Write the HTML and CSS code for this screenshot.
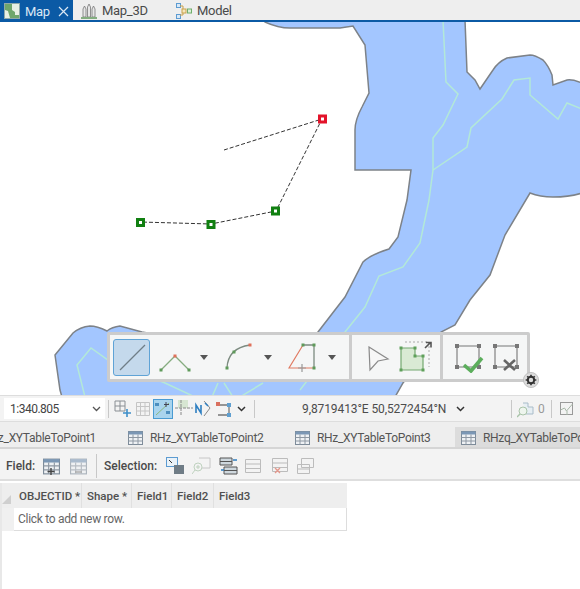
FILE: index.html
```html
<!DOCTYPE html>
<html lang="en">

<head>
  <meta charset="UTF-8">
  <title>Map</title>
  <link rel="stylesheet" href="styles.css">
</head>

<body>
  <div class="viewTabs">
    <div class="viewTab active">
      <svg viewBox="0 0 16 16" width="16" height="16">
        <rect x="0.500" y="0.500" width="15" height="15" fill="#e8f0e4" stroke="#8fa8a8" />
        <path d="M1 1h7v6l3 2v3h4v3H6l-2-7-3-1z" fill="#6fa66c" />
      </svg>
      <span class="tabName">Map</span>
      <svg class="closeIco" viewBox="0 0 11 11" width="11" height="11">
        <path d="M1 1l9 9M10 1l-9 9" stroke="#dbe8f4" stroke-width="1.200" fill="none" />
      </svg>
    </div>
    <div class="viewTab map3d">
      <svg viewBox="0 0 16 16" width="16" height="16">
        <path d="M2 14V6l1.500-3L5 6v8zM6.500 14V4L8 1l1.500 3v10zM11 14V6l1.500-3L14 6v8z" fill="#e6e6e6" stroke="#777" stroke-width="0.800" />
        <path d="M0 14h16v2H0z" fill="#83ad7f" />
      </svg>
      <span>Map_3D</span>
    </div>
    <div class="viewTab model">
      <svg viewBox="0 0 16 16" width="16" height="16">
        <g fill="#d8e8f6" stroke="#5c9bd1">
          <rect x="0.500" y="0.500" width="4" height="4" />
          <rect x="0.500" y="11.500" width="4" height="4" />
        </g>
        <path d="M4 3h3v9H4" stroke="#c9a24a" fill="none" />
        <rect x="6" y="6" width="4" height="4" fill="#f5e6bd" stroke="#c9a24a" />
        <rect x="11.500" y="6" width="4" height="4" fill="#dcefd9" stroke="#6fae6a" />
      </svg>
      <span>Model</span>
    </div>
  </div>

  <div class="mapView">
    <svg class="mapCanvas" viewBox="0 22 580 373" width="580" height="373">
      <path class="water"
        d="M265 22 Q278 28 290 28 L340 28 L353 26 L365 45 L369 93 L362 107 Q355 120 355 130 L355 170 L411 170 L407 200 L398 237 L389 249 Q370 255 363 262 L345 297 L318 332 L300 360 L142 332 L120 326 Q112 327 107 331 Q97 326 90 326 Q80 327 73 333 L55 355 L60 390 L62 397 L395 397 L403 383 L441 332 L455 325 L470 300 L490 275 L505 235 L530 193 Q540 197 553 197 Q570 197 582 193 L582 83 Q572 79 567 80 L553 85 L552 75 Q548 65 543 60 Q535 55 530 55 L507 58 Q498 62 493 70 L480 89 L475 80 L467 72 L465 20 L265 20 Z" />
      <path class="stream" d="M443 20 L446 82 L458 94 L443 125 L433 138 L433 170 L429 200 L420 243 L403 267 L379 276 L365 307 L345 332 L300 390" />
      <path class="stream" d="M433 170 L467 147 L471 128 L502 99 L514 80 L530 78 L530 95 L558 119 L567 103 L582 109" />
      <path class="stream" d="M85 397 L77 365 L91 348 L108 360 L165 383 L195 397" />
      <path class="stream" d="M218 383 L212 397M224 383 L233 397M263 383 L240 397" />

      <path class="sketch" d="M224 150 L322 119 L276 211 L211 224 L140 222" />
      <g class="vertex">
        <rect x="137.500" y="219.500" width="6" height="6" />
        <rect x="208" y="221.500" width="6" height="6" />
        <rect x="272.500" y="208" width="6" height="6" />
      </g>
      <rect class="vertexLast" x="319.500" y="116" width="6" height="6" />
    </svg>

    <div class="sketchBar">
      <div class="barGroup first">
        <div class="barBtn">
          <svg viewBox="0 0 34 34" width="34" height="34">
            <path d="M5 30L30 5" stroke="#6f7d87" stroke-width="1.300" fill="none" />
          </svg>
        </div>
        <svg class="ml8" viewBox="0 0 36 36" width="36" height="36">
          <path d="M3 31L17 17L31 31" stroke="#86ac80" stroke-width="1.300" fill="none" />
          <rect x="1.500" y="29.500" width="3" height="3" fill="#5f9a5a" />
          <rect x="29.500" y="29.500" width="3" height="3" fill="#5f9a5a" />
          <rect x="15.500" y="15.500" width="3" height="3" fill="#e0705a" />
        </svg>
        <span class="caret ml6"></span>
        <svg class="ml12" viewBox="0 0 36 36" width="36" height="36">
          <path d="M7 29Q8 9 30 6" stroke="#7c8b80" stroke-width="1.300" fill="none" />
          <rect x="5.500" y="27.500" width="3" height="3" fill="#5f9a5a" />
          <rect x="12.500" y="11.500" width="3" height="3" fill="#5f9a5a" />
          <rect x="28.500" y="4.500" width="3" height="3" fill="#e0705a" />
        </svg>
        <span class="caret ml8"></span>
        <svg class="ml16" viewBox="0 0 36 36" width="36" height="36">
          <path d="M15 6H26V29" stroke="#7c8b80" stroke-width="1.300" fill="none" />
          <path d="M15 6L1 29H26" stroke="#e07a62" stroke-width="1.200" fill="none" />
          <path d="M14 25v8M10 29h8" stroke="#999" stroke-width="1.200" fill="none" />
          <rect x="13.500" y="4.500" width="3" height="3" fill="#5f9a5a" />
          <rect x="24.500" y="4.500" width="3" height="3" fill="#5f9a5a" />
          <rect x="24.500" y="27.500" width="3" height="3" fill="#5f9a5a" />
        </svg>
        <span class="caret ml4"></span>
      </div>
      <div class="barGroup second">
        <svg viewBox="0 0 24 32" width="24" height="32">
          <path d="M2 6L21 18L11 20L3 29Z" fill="#f7f7f7" stroke="#8a8a8a" stroke-width="1.200" />
        </svg>
        <svg class="ml8" viewBox="0 0 34 36" width="34" height="36">
          <path d="M6 3H30V28" stroke="#aaa" stroke-dasharray="2 2" fill="none" />
          <path d="M2 9H16V17H24V31H2Z" fill="#d9ead4" stroke="#74a870" stroke-width="1.200" />
          <g fill="#5fa05a">
            <rect x="0.500" y="7.500" width="3" height="3" />
            <rect x="14.500" y="7.500" width="3" height="3" />
            <rect x="14.500" y="15.500" width="3" height="3" />
            <rect x="22.500" y="15.500" width="3" height="3" />
            <rect x="22.500" y="29.500" width="3" height="3" />
            <rect x="0.500" y="29.500" width="3" height="3" />
          </g>
          <path d="M26 9l5-5M27 3.500h5v5" stroke="#555" stroke-width="1.600" fill="none" />
        </svg>
      </div>
      <div class="barGroup third">
        <svg viewBox="0 0 32 32" width="32" height="32">
          <path d="M3 5H25V26H3Z" stroke="#777" stroke-width="1.100" fill="none" />
          <g fill="#777">
            <rect x="1" y="3" width="4" height="4" />
            <rect x="23" y="3" width="4" height="4" />
            <rect x="1" y="24" width="4" height="4" />
            <rect x="23" y="24" width="4" height="4" />
          </g>
          <path d="M10 24L17 30L28 17" stroke="#5cae5c" stroke-width="3.600" fill="none" />
        </svg>
        <svg class="ml6" viewBox="0 0 32 32" width="32" height="32">
          <path d="M3 5H25V26H3Z" stroke="#777" stroke-width="1.100" fill="none" />
          <g fill="#777">
            <rect x="1" y="3" width="4" height="4" />
            <rect x="23" y="3" width="4" height="4" />
            <rect x="1" y="24" width="4" height="4" />
            <rect x="23" y="24" width="4" height="4" />
          </g>
          <path d="M12 19L23 29M23 19L12 29" stroke="#666" stroke-width="2.600" fill="none" />
        </svg>
      </div>
      <svg class="gear" viewBox="0 0 18 18" width="16" height="16">
        <circle cx="9" cy="9" r="8.500" fill="#dcdcdc" stroke="#bbb" />
        <circle cx="9" cy="9" r="3.600" fill="none" stroke="#333" stroke-width="2.200" />
        <path d="M9 3v3M9 12v3M3 9h3M12 9h3M4.800 4.800l2 2M11.200 11.200l2 2M13.200 4.800l-2 2M6.800 11.200l-2 2" stroke="#333" stroke-width="1.800" />
      </svg>
    </div>
  </div>

  <div class="statusBar">
    <div class="scaleBox">
      <span>1:340.805</span>
      <svg viewBox="0 0 9 6" width="9" height="6"><path d="M1 1l3.500 3.500L8 1" stroke="#555" stroke-width="1.300" fill="none" /></svg>
    </div>
    <span class="sep ml3"></span>
    <svg class="ml5" viewBox="0 0 18 18" width="18" height="18">
      <path d="M1 1h10v10H1zM1 6h10M6 1v10" stroke="#8a8f94" fill="none" />
      <path d="M13 9v8M9 13h8" stroke="#3f8fc9" stroke-width="1.600" />
    </svg>
    <svg class="faint ml4" viewBox="0 0 14 14" width="14" height="14">
      <path d="M.5.500h13v13H.5zM.5 4.500h13M.5 9h13M4.500.5v13M9 .5v13" stroke="#a8a8a8" fill="none" />
    </svg>
    <div class="snapBtn ml3">
      <svg viewBox="0 0 18 18" width="18" height="18">
        <path d="M2 15L15 3" stroke="#8cb87f" />
        <rect x="1" y="3" width="4" height="3" fill="#4d8fbf" />
        <rect x="12" y="11" width="4" height="3" fill="#4d8fbf" />
        <path d="M12 2v5M10 4.500h5" stroke="#445" />
      </svg>
    </div>
    <svg class="ml2" viewBox="0 0 18 18" width="18" height="18">
      <rect x="3" y="0" width="10" height="8" fill="#d7e6d2" />
      <path d="M6 0v16M0 8h18" stroke="#888" stroke-dasharray="3 1" fill="none" />
    </svg>
    <svg class="ml2" viewBox="0 0 18 18" width="18" height="18">
      <path d="M1 13V5l5 8V5" stroke="#2f7fc1" stroke-width="1.600" fill="none" />
      <path d="M9 1L15 8L9 16" stroke="#888" fill="none" />
      <path d="M10 3l3 3" stroke="#2f7fc1" stroke-width="1.400" />
    </svg>
    <svg class="ml2" viewBox="0 0 20 18" width="20" height="18">
      <path d="M3 5H14V15H3" stroke="#777" stroke-width="1.300" fill="none" />
      <rect x="1" y="2" width="4" height="4" fill="#d9705f" />
      <rect x="12" y="3" width="4" height="4" fill="#5f9fd0" />
      <rect x="12" y="13" width="4" height="4" fill="#5f9fd0" />
    </svg>
    <svg class="ml2" viewBox="0 0 9 6" width="9" height="6"><path d="M1 1l3.500 3.500L8 1" stroke="#333" stroke-width="1.500" fill="none" /></svg>
    <span class="sep ml8"></span>
    <span class="coords">9,8719413°E 50,5272454°N</span>
    <svg viewBox="0 0 9 6" width="9" height="6"><path d="M1 1l3.500 3.500L8 1" stroke="#333" stroke-width="1.500" fill="none" /></svg>
    <span class="sep ml46"></span>
    <svg class="ml5" viewBox="0 0 18 18" width="18" height="18">
      <path d="M6 3h5v4h5v7H9" stroke="#a9bcc9" fill="#e6eef3" />
      <circle cx="6" cy="11" r="4" stroke="#a9c4a9" fill="#eef5ee" />
      <path d="M3 14l-3 3" stroke="#a9c4a9" stroke-width="1.400" />
    </svg>
    <span class="selNum">0</span>
    <span class="sep ml3"></span>
    <svg class="ml8" viewBox="0 0 14 14" width="14" height="14">
      <rect x="0.500" y="0.500" width="12" height="12" fill="none" stroke="#9a9a9a" />
      <path d="M.5 8l4-2 2 3 6-7M7 9v4" stroke="#a8b8a8" fill="none" />
    </svg>
  </div>

  <div class="tableTabs">
    <div class="tableTab cut"><span>RHz_XYTableToPoint1</span></div>
    <div class="tableTab point2">
      <svg viewBox="0 0 15 14" width="15" height="14"><use href="#grid" /></svg>
      <span>RHz_XYTableToPoint2</span>
    </div>
    <div class="tableTab point3">
      <svg viewBox="0 0 15 14" width="15" height="14"><use href="#grid" /></svg>
      <span>RHz_XYTableToPoint3</span>
    </div>
    <div class="tableTab current">
      <svg viewBox="0 0 15 14" width="15" height="14"><use href="#grid" /></svg>
      <span>RHzq_XYTableToPoint</span>
    </div>
  </div>

  <div class="tableTools">
    <b class="fieldLabel">Field:</b>
    <svg viewBox="0 0 17 17" width="17" height="17">
      <use href="#grid" />
      <path d="M8 10v7M4.500 13.500h7" stroke="#444" stroke-width="1.400" />
    </svg>
    <svg class="faint ml10" viewBox="0 0 17 17" width="17" height="17">
      <use href="#grid" />
      <path d="M5 14h7" stroke="#777" stroke-width="1.400" />
    </svg>
    <span class="sep ml9"></span>
    <b class="selLabel">Selection:</b>
    <svg viewBox="0 0 19 18" width="19" height="18">
      <rect x="0.500" y="0.500" width="11" height="9" fill="#eaf2f8" stroke="#5c9bd1" />
      <rect x="8" y="8" width="10" height="9" fill="#6f7c86" />
      <path d="M3 3l3 3" stroke="#333" />
    </svg>
    <svg class="faint ml7" viewBox="0 0 19 18" width="19" height="18">
      <path d="M7 1h11v10H10" stroke="#aaa" fill="none" />
      <circle cx="6" cy="10" r="4" stroke="#9dbd9d" fill="none" />
      <path d="M3 13l-3 4M4 10h4M6 8v4" stroke="#9dbd9d" />
    </svg>
    <svg class="ml8" viewBox="0 0 19 18" width="19" height="18">
      <path d="M1 1h12v7H1zM1 4.500h12M5 10h13v7H5zM5 13.500h13" stroke="#555" fill="#cfd8de" />
      <path d="M14 3h4M2 13h3" stroke="#2f7fc1" stroke-width="1.500" />
    </svg>
    <svg class="faint ml7" viewBox="0 0 16 14" width="16" height="14">
      <path d="M.5.500h15v13H.5zM.5 5h15M.5 9.500h15" stroke="#999" fill="none" />
    </svg>
    <svg class="faint ml11" viewBox="0 0 16 16" width="16" height="16">
      <path d="M.5.500h15v13H.5zM.5 5h15M.5 9.500h15" stroke="#999" fill="none" />
      <path d="M3 10l5 5M8 10l-5 5" stroke="#dc5a46" stroke-width="1.300" />
    </svg>
    <svg class="faint ml9" viewBox="0 0 17 16" width="17" height="16">
      <path d="M4.500.500h12v9h-12zM.5 6.500h12v9H.5zM.5 11h12" stroke="#999" fill="#f3f3f3" />
    </svg>
  </div>

  <div class="attrTable">
    <div class="headerRow">
      <div class="cornerCell"><span class="corner"></span></div>
      <div class="headCell oid">OBJECTID *</div>
      <div class="headCell shape">Shape *</div>
      <div class="headCell f1">Field1</div>
      <div class="headCell f2">Field2</div>
      <div class="headCell f3">Field3</div>
    </div>
    <div class="addRow">
      <div class="rowHead"></div>
      <div class="addCell">Click to add new row.</div>
    </div>
  </div>

  <svg class="defs" width="0" height="0">
    <symbol id="grid" viewBox="0 0 15 14" overflow="visible">
      <rect x="0.500" y="0.500" width="14" height="13" fill="#eef1f4" stroke="#7d8b99" />
      <rect x="0.500" y="0.500" width="14" height="3" fill="#7b97b5" />
      <path d="M.5 6.500h14M.5 10h14M5 3.500v10M10 3.500v10" stroke="#8e98a3" fill="none" />
    </symbol>
  </svg>
</body>

</html>
```

FILE: styles.css
```css
html,
body {
  margin: 0;
  height: 589px;
  overflow: hidden;
}

body {
  font-family: Roboto, "Noto Sans", sans-serif;
  font-size: 12px;
  color: #4c4c4c;
  background: #fff;
}

svg {
  display: block;
  flex: none;
}

.defs {
  position: absolute;
}

.faint {
  opacity: 0.6;
}

.ml2 { margin-left: 2px; }
.ml3 { margin-left: 3px; }
.ml4 { margin-left: 4px; }
.ml5 { margin-left: 5px; }
.ml6 { margin-left: 6px; }
.ml7 { margin-left: 7px; }
.ml8 { margin-left: 8px; }
.ml9 { margin-left: 9px; }
.ml10 { margin-left: 10px; }
.ml11 { margin-left: 11px; }
.ml12 { margin-left: 12px; }
.ml16 { margin-left: 16px; }
.ml46 { margin-left: 46px; }

/* view tabs */
.viewTabs {
  display: flex;
  height: 20px;
  background: #eeeeee;
  border-bottom: 2px solid #0b5aa5;
}

.viewTab {
  display: flex;
  align-items: center;
  flex: none;
  gap: 5px;
  height: 21px;
  font-size: 13px;
  letter-spacing: -0.300px;
  color: #4a4a4a;
}

.viewTab.active {
  width: 73px;
  height: 22px;
  padding-left: 4px;
  box-sizing: border-box;
  background: #0b5aa5;
  color: #dbe8f4;
}

.tabName {
  width: 26px;
}

.closeIco {
  margin-left: 2px;
}

.map3d {
  margin-left: 8px;
  width: 95px;
}

/* map */
.mapView {
  position: relative;
  height: 373px;
}

.water {
  fill: #a3c6ff;
  stroke: #7d8288;
  stroke-width: 1.500;
}

.stream {
  fill: none;
  stroke: #b3e9d8;
  stroke-width: 1.500;
}

.sketch {
  fill: none;
  stroke: #333;
  stroke-width: 1;
  stroke-dasharray: 4 2;
}

.vertex rect {
  fill: #fff;
  stroke: #118011;
  stroke-width: 3;
}

.vertexLast {
  fill: #fff;
  stroke: #e3132a;
  stroke-width: 3;
}

/* sketch toolbar */
.sketchBar {
  position: absolute;
  left: 107px;
  top: 310px;
  display: flex;
  height: 44px;
  background: #f5f6f6;
  border: 3px solid #cccccc;
  border-radius: 2px;
}

.barGroup {
  display: flex;
  align-items: center;
  box-sizing: border-box;
}

.barGroup + .barGroup {
  border-left: 3px solid #cccccc;
}

.barGroup.first {
  width: 239px;
  padding-left: 3px;
}

.barGroup.second {
  width: 91px;
  padding-left: 15px;
}

.barGroup.third {
  width: 87px;
  padding-left: 11px;
}

.barBtn {
  width: 37px;
  height: 37px;
  box-sizing: border-box;
  padding: 0.500px;
  background: #c4d9ec;
  border: 1px solid #5fa3d6;
  border-radius: 3px;
}

.caret {
  flex: none;
  width: 0;
  height: 0;
  border-left: 4px solid transparent;
  border-right: 4px solid transparent;
  border-top: 5px solid #555;
}

.gear {
  position: absolute;
  right: -12px;
  bottom: -9px;
}

/* status bar */
.statusBar {
  display: flex;
  align-items: center;
  height: 27px;
  padding-left: 4px;
  box-sizing: border-box;
  background: #f3f3f3;
  border-top: 1px solid #dddddd;
  border-bottom: 1px solid #dddddd;
}

.scaleBox {
  display: flex;
  align-items: center;
  justify-content: space-between;
  width: 101px;
  height: 21px;
  padding: 0 4px 0 6px;
  box-sizing: border-box;
  background: #fff;
  color: #444;
  font-size: 12px;
  letter-spacing: -0.500px;
}

.sep {
  flex: none;
  width: 1px;
  height: 18px;
  background: #c8c8c8;
}

.snapBtn {
  background: #a9d4ee;
  border: 1px solid #4a9bd2;
}

.coords {
  flex: none;
  width: 154px;
  margin-left: 47px;
  white-space: nowrap;
  color: #4c4c4c;
  letter-spacing: -0.100px;
}

.selNum {
  width: 10px;
  margin-left: 3px;
  color: #999;
}

/* table tabs */
.tableTabs {
  display: flex;
  height: 27px;
  padding-top: 5px;
  background: #eeeeee;
  border-bottom: 2px solid #d5d5d5;
  box-sizing: border-box;
  overflow: hidden;
}

.tableTab {
  display: flex;
  flex: none;
  align-items: center;
  gap: 7px;
  box-sizing: border-box;
  padding-left: 22px;
  padding-top: 1px;
  white-space: nowrap;
  color: #555;
  letter-spacing: -0.300px;
}

.tableTab.cut {
  width: 106px;
  padding: 1px 10px 0 0;
  overflow: hidden;
  justify-content: flex-end;
}

.tableTab.point2 {
  width: 167px;
}

.tableTab.point3 {
  width: 182px;
}

.tableTab.current {
  background: #dcdcdc;
  padding-left: 6px;
}

/* table toolbar */
.tableTools {
  display: flex;
  align-items: center;
  height: 32px;
  padding-left: 6px;
  padding-top: 4px;
  box-sizing: border-box;
  background: #f3f3f3;
  border-bottom: 2px solid #dedede;
}

.tableTools b {
  flex: none;
  color: #4a4a4a;
  font-weight: 500;
}

.fieldLabel {
  width: 37px;
}

.selLabel {
  width: 62px;
  margin-left: 7px;
}

.tableTools .sep {
  height: 24px;
}

/* table */
.attrTable {
  height: 106px;
  margin-top: 2px;
  border-left: 2px solid #e8e8e8;
}

.headerRow {
  display: flex;
  width: 345px;
  height: 25px;
  background: #eeeeee;
  font-size: 11.500px;
  font-weight: 500;
  color: #505050;
  white-space: nowrap;
}

.cornerCell {
  position: relative;
  width: 12px;
}

.corner {
  position: absolute;
  left: 0;
  bottom: 4px;
  width: 0;
  height: 0;
  border-left: 9px solid transparent;
  border-bottom: 9px solid #cfcfcf;
}

.headCell {
  display: flex;
  align-items: center;
  padding-left: 5px;
  box-sizing: border-box;
  border-right: 1px solid #e0e0e0;
}

.oid {
  width: 68px;
}

.shape {
  width: 50px;
}

.f1 {
  width: 40px;
}

.f2 {
  width: 42px;
}

.f3 {
  flex: 1;
  border-right: 0;
}

.addRow {
  display: flex;
  width: 345px;
  height: 23px;
}

.rowHead {
  width: 12px;
  background: #f0f0f0;
}

.addCell {
  flex: 1;
  padding-left: 4px;
  line-height: 23px;
  letter-spacing: -0.300px;
  color: #666;
  background: #fff;
  border: 1px solid #dddddd;
  border-top: 0;
  border-left: 0;
}
```
